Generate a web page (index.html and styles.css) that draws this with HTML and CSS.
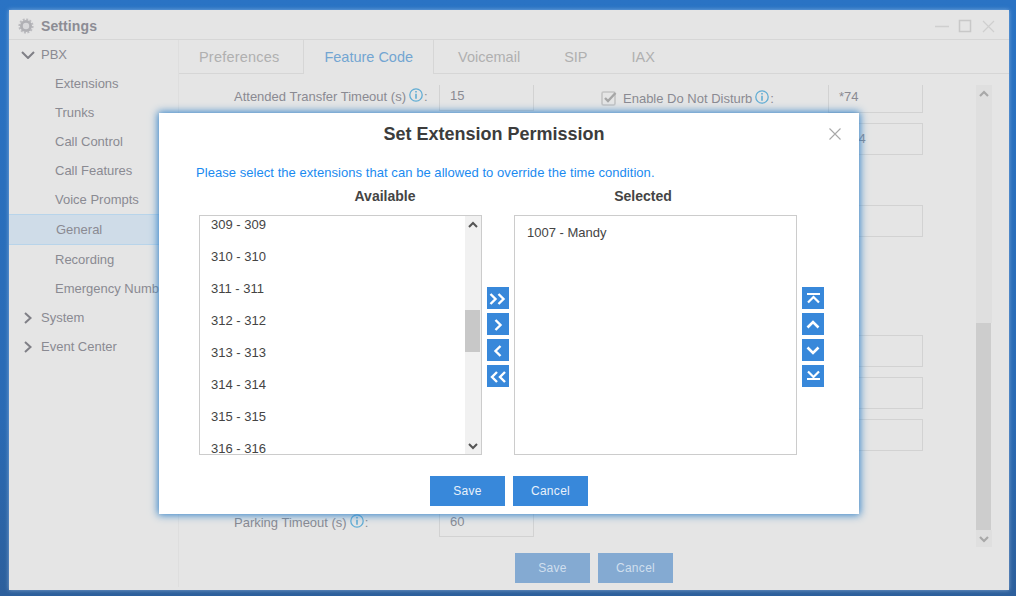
FILE: index.html
```html
<!DOCTYPE html>
<html lang="en">
<head>
    <meta charset="UTF-8">
    <title>Settings</title>
    <link rel="stylesheet" href="styles.css">
</head>
<body>
    <div class="window">
        <div class="title-bar">
            <svg class="gear" width="16" height="16" viewBox="0 0 16 16">
                <circle cx="8" cy="8" r="6.6" fill="none" stroke="#bcbcc0" stroke-width="2" stroke-dasharray="2 1.45"/>
                <circle cx="8" cy="8" r="6" fill="#b0b0b4"/>
                <circle cx="8" cy="8" r="3.2" fill="#d8d8da"/>
            </svg>
            <span class="title-text">Settings</span>
            <div class="window-controls">
                <svg width="14" height="14" viewBox="0 0 14 14"><path d="M0 7.5H14" stroke="#cfcfcf" stroke-width="1.6"/></svg>
                <svg width="14" height="14" viewBox="0 0 14 14"><rect x="1.5" y="1.5" width="11" height="11" fill="none" stroke="#c8c8c8" stroke-width="1.5"/></svg>
                <svg width="14" height="14" viewBox="0 0 14 14"><path d="M2 2L13 13M13 2L2 13" stroke="#cfcfcf" stroke-width="1.2"/></svg>
            </div>
        </div>

        <div class="window-body">
            <div class="sidebar">
                <div class="nav-group">
                    <svg width="14" height="8" viewBox="0 0 14 8"><path d="M1 1L7 7L13 1" fill="none" stroke="#7f7f86" stroke-width="2"/></svg>
                    PBX
                </div>
                <div class="nav-item">Extensions</div>
                <div class="nav-item">Trunks</div>
                <div class="nav-item">Call Control</div>
                <div class="nav-item">Call Features</div>
                <div class="nav-item">Voice Prompts</div>
                <div class="nav-item nav-item-active">General</div>
                <div class="nav-item">Recording</div>
                <div class="nav-item">Emergency Number</div>
                <div class="nav-group">
                    <svg class="nav-closed" width="8" height="12" viewBox="0 0 8 12"><path d="M1 1L6.5 6L1 11" fill="none" stroke="#7f7f86" stroke-width="2"/></svg>
                    System
                </div>
                <div class="nav-group">
                    <svg class="nav-closed" width="8" height="12" viewBox="0 0 8 12"><path d="M1 1L6.5 6L1 11" fill="none" stroke="#7f7f86" stroke-width="2"/></svg>
                    Event Center
                </div>
            </div>

            <div class="main">
                <div class="tabs">
                    <div class="tab tab-first">Preferences</div>
                    <div class="tab tab-active">Feature Code</div>
                    <div class="tab tab-after-active">Voicemail</div>
                    <div class="tab">SIP</div>
                    <div class="tab">IAX</div>
                </div>

                <div class="content">
                    <div class="form">
                        <div class="form-col form-col-left">
                            <div class="field field-first-left">
                                <label class="field-label field-label-left">Attended Transfer Timeout (s)<svg class="info" width="14" height="14" viewBox="0 0 14 14"><circle cx="7" cy="7" r="6.2" fill="none" stroke="#62add4" stroke-width="1.3"/><path d="M7 3V4.6M7 5.8V10.8" stroke="#62add4" stroke-width="1.6"/></svg>:</label>
                                <div class="field-input">15</div>
                            </div>
                            <div class="field field-parking">
                                <label class="field-label field-label-left">Parking Timeout (s)<svg class="info" width="14" height="14" viewBox="0 0 14 14"><circle cx="7" cy="7" r="6.2" fill="none" stroke="#62add4" stroke-width="1.3"/><path d="M7 3V4.6M7 5.8V10.8" stroke="#62add4" stroke-width="1.6"/></svg>:</label>
                                <div class="field-input">60</div>
                            </div>
                        </div>

                        <div class="form-col form-col-right">
                            <div class="field field-first-right">
                                <label class="field-label field-label-right">
                                    <svg class="check" width="16" height="16" viewBox="0 0 16 16"><rect x="1" y="2" width="13" height="13" rx="1.5" fill="none" stroke="#c4c4c4" stroke-width="1.6"/><path d="M4 8L7 11L14.5 3" fill="none" stroke="#a6a6a6" stroke-width="2.4"/></svg>Enable Do Not Disturb<svg class="info" width="14" height="14" viewBox="0 0 14 14"><circle cx="7" cy="7" r="6.2" fill="none" stroke="#62add4" stroke-width="1.3"/><path d="M7 3V4.6M7 5.8V10.8" stroke="#62add4" stroke-width="1.6"/></svg>:
                                </label>
                                <div class="field-input">*74</div>
                            </div>
                            <div class="field field-stack">
                                <div class="field-label-right"></div>
                                <div class="field-input">*074</div>
                            </div>
                            <div class="field field-gap-small">
                                <div class="field-label-right"></div>
                                <div class="field-input"></div>
                            </div>
                            <div class="field field-gap-large">
                                <div class="field-label-right"></div>
                                <div class="field-input"></div>
                            </div>
                            <div class="field field-stack">
                                <div class="field-label-right"></div>
                                <div class="field-input"></div>
                            </div>
                            <div class="field field-stack">
                                <div class="field-label-right"></div>
                                <div class="field-input"></div>
                            </div>
                        </div>
                    </div>

                    <div class="page-scrollbar">
                        <div class="page-scroll-btn">
                            <svg width="10" height="8" viewBox="0 0 10 8"><path d="M1 6L5 2L9 6" fill="none" stroke="#a8a8a8" stroke-width="2.2"/></svg>
                        </div>
                        <div class="page-scroll-track"></div>
                        <div class="page-scroll-thumb"></div>
                        <div class="page-scroll-btn">
                            <svg width="10" height="8" viewBox="0 0 10 8"><path d="M1 2L5 6L9 2" fill="none" stroke="#a8a8a8" stroke-width="2.2"/></svg>
                        </div>
                    </div>
                </div>

                <div class="page-buttons">
                    <button class="btn btn-dim">Save</button>
                    <button class="btn btn-dim">Cancel</button>
                </div>
            </div>
        </div>
    </div>

    <div class="modal">
        <div class="modal-title">Set Extension Permission</div>
        <svg class="modal-close" width="12" height="12" viewBox="0 0 12 12"><path d="M0.5 0.5L11.5 11.5M11.5 0.5L0.5 11.5" stroke="#a8a8a8" stroke-width="1.1"/></svg>
        <div class="modal-desc">Please select the extensions that can be allowed to override the time condition.</div>

        <div class="list-heads">
            <div class="list-head">Available</div>
            <div class="list-head">Selected</div>
        </div>

        <div class="transfer">
            <div class="list">
                <ul class="list-items list-items-scrolled">
                    <li>309 - 309</li>
                    <li>310 - 310</li>
                    <li>311 - 311</li>
                    <li>312 - 312</li>
                    <li>313 - 313</li>
                    <li>314 - 314</li>
                    <li>315 - 315</li>
                    <li>316 - 316</li>
                </ul>
                <div class="scrollbar">
                    <div class="scroll-btn">
                        <svg width="10" height="8" viewBox="0 0 10 8"><path d="M1 6L5 2L9 6" fill="none" stroke="#555" stroke-width="2"/></svg>
                    </div>
                    <div class="scroll-thumb"></div>
                    <div class="scroll-btn scroll-btn-down">
                        <svg width="10" height="8" viewBox="0 0 10 8"><path d="M1 2L5 6L9 2" fill="none" stroke="#555" stroke-width="2"/></svg>
                    </div>
                </div>
            </div>

            <div class="arrows">
                <button class="arrow-btn"><svg width="22" height="22" viewBox="0 0 22 22"><path d="M3.5 7L8.5 12L3.5 17M11.5 7L16.5 12L11.5 17" fill="none" stroke="#fff" stroke-width="2.4"/></svg></button>
                <button class="arrow-btn"><svg width="22" height="22" viewBox="0 0 22 22"><path d="M8.5 7L13.5 12L8.5 17" fill="none" stroke="#fff" stroke-width="2.4"/></svg></button>
                <button class="arrow-btn"><svg width="22" height="22" viewBox="0 0 22 22"><path d="M13.5 7L8.5 12L13.5 17" fill="none" stroke="#fff" stroke-width="2.4"/></svg></button>
                <button class="arrow-btn"><svg width="22" height="22" viewBox="0 0 22 22"><path d="M10 7L5 12L10 17M18 7L13 12L18 17" fill="none" stroke="#fff" stroke-width="2.4"/></svg></button>
            </div>

            <div class="list">
                <ul class="list-items">
                    <li>1007 - Mandy</li>
                </ul>
            </div>

            <div class="arrows">
                <button class="arrow-btn"><svg width="22" height="22" viewBox="0 0 22 22"><path d="M5 7H18" stroke="#fff" stroke-width="2"/><path d="M6 15.5L11.5 10L17 15.5" fill="none" stroke="#fff" stroke-width="2.2"/></svg></button>
                <button class="arrow-btn"><svg width="22" height="22" viewBox="0 0 22 22"><path d="M5.5 14.5L11 9L16.5 14.5" fill="none" stroke="#fff" stroke-width="2.6"/></svg></button>
                <button class="arrow-btn"><svg width="22" height="22" viewBox="0 0 22 22"><path d="M5.5 8.5L11 14L16.5 8.5" fill="none" stroke="#fff" stroke-width="2.6"/></svg></button>
                <button class="arrow-btn"><svg width="22" height="22" viewBox="0 0 22 22"><path d="M6 6.5L11.5 12L17 6.5" fill="none" stroke="#fff" stroke-width="2.2"/><path d="M5 14H18" stroke="#fff" stroke-width="2"/></svg></button>
            </div>
        </div>

        <div class="modal-buttons">
            <button class="btn">Save</button>
            <button class="btn">Cancel</button>
        </div>
    </div>
</body>
</html>
```

FILE: styles.css
```css
* {
    box-sizing: border-box;
}

body {
    margin: 0;
    height: 596px;
    padding: 10px 7px 6px 9px;
    overflow: hidden;
    background: linear-gradient(180deg, #2a73c4 0%, #2a6ab4 70%, #2d5f9c 100%);
    font-family: "Liberation Sans", Arial, sans-serif;
    font-size: 13px;
    color: #8a8a92;
}

.window {
    display: flex;
    flex-direction: column;
    height: 580px;
    background: #e5e5e5;
    box-shadow: 0 0 4px rgba(190, 215, 240, 0.6);
}

.title-bar {
    display: flex;
    align-items: center;
    height: 30px;
    padding: 2px 14px 0 9px;
    border-bottom: 1px solid #d6d6d6;
    flex-shrink: 0;
}

.gear {
    margin-right: 7px;
}

.title-text {
    font-size: 14px;
    font-weight: bold;
    letter-spacing: 0.1px;
    color: #8c8c94;
}

.window-controls {
    display: flex;
    gap: 9px;
    margin-left: auto;
}

.window-body {
    display: flex;
    flex: 1;
}

/* Left navigation */
.sidebar {
    width: 169px;
    flex-shrink: 0;
    white-space: nowrap;
}

.nav-group {
    display: flex;
    align-items: center;
    height: 29px;
    padding-left: 12px;
}

.nav-group svg {
    margin-right: 6px;
}

.nav-group .nav-closed {
    margin: 0 9px 0 3px;
}

.nav-item {
    height: 29px;
    line-height: 29px;
    padding-left: 46px;
}

.nav-item-active {
    height: 31px;
    line-height: 29px;
    padding-left: 47px;
    background: #cfdce8;
    border-top: 1px solid #b8d4ea;
    border-bottom: 1px solid #b8d4ea;
}

/* Tabs and form */
.main {
    display: flex;
    flex-direction: column;
    flex: 1;
    min-width: 0;
    margin-bottom: 3px;
    border-left: 1px solid #dedede;
}

.tabs {
    display: flex;
    height: 34px;
    border-bottom: 1px solid #d6d6d6;
    flex-shrink: 0;
    font-size: 14.5px;
    color: #b0b0b0;
    margin-bottom: -3px;
}

.tab {
    height: 34px;
    line-height: 34px;
    padding: 0 22px;
}

.tab-first {
    padding: 0 24px 0 20px;
    letter-spacing: 0.2px;
}

.tab-active {
    padding: 0 20px;
    background: #e5e5e5;
    color: #73a5d2;
    border-left: 1px solid #d6d6d6;
    border-right: 1px solid #d6d6d6;
}

.tab-after-active {
    padding-left: 24px;
}

.content {
    display: flex;
    height: 462px;
    margin-top: 14px;
    padding-right: 17px;
}

.form {
    display: flex;
    flex: 1;
    min-width: 0;
    overflow: hidden;
}

.form-col-left {
    width: 422px;
    flex-shrink: 0;
    padding-left: 55px;
}

.form-col-left .field-input {
    line-height: 32px;
}

.field {
    display: flex;
    height: 32px;
}

.field-first-left {
    margin-top: -6px;
}

.field-parking {
    margin-top: 394px;
}

.field-first-right {
    margin-top: -4px;
}

.field-stack {
    margin-top: 10px;
}

.field-gap-small {
    margin-top: 50px;
}

.field-gap-large {
    margin-top: 98px;
}

.field-label {
    display: flex;
    align-items: center;
    padding-top: 2px;
    white-space: nowrap;
}

.field-label-left {
    width: 205px;
}

.field-label-right {
    width: 227px;
    flex-shrink: 0;
}

.info {
    margin: 0 1px 3px 3px;
}

.check {
    margin-right: 6px;
}

.field-input {
    width: 95px;
    height: 32px;
    line-height: 30px;
    padding-left: 10px;
    border: 1px solid #d2d2d2;
    white-space: nowrap;
}

.page-scrollbar {
    display: flex;
    flex-direction: column;
    width: 16px;
    flex-shrink: 0;
}

.page-scroll-btn {
    display: flex;
    align-items: center;
    justify-content: center;
    height: 17px;
    background: #dfdfdf;
}

.page-scroll-track {
    flex: 1;
    background: #dfdfdf;
}

.page-scroll-thumb {
    height: 207px;
    width: 15px;
    background: #cdcdcd;
}

.page-buttons {
    display: flex;
    gap: 8px;
    margin-top: 6px;
    padding-left: 336px;
}

/* Buttons */
.btn {
    width: 75px;
    height: 30px;
    padding: 0;
    border: none;
    background: #3888da;
    color: #e8f1fa;
    font-family: "Liberation Sans", Arial, sans-serif;
    font-size: 12px;
    letter-spacing: 0.3px;
}

.btn-dim {
    background: #84aad2;
    color: #d0dfee;
}

/* Dialog */
.modal {
    position: absolute;
    left: 159px;
    top: 113px;
    width: 700px;
    height: 401px;
    background: #ffffff;
    box-shadow: 0 0 8px 1px #2f80c8;
    color: #444444;
}

.modal-title {
    height: 42px;
    padding-right: 30px;
    line-height: 42px;
    text-align: center;
    font-size: 18px;
    font-weight: bold;
    color: #3c3c3c;
}

.modal-close {
    position: absolute;
    top: 15px;
    right: 18px;
}

.modal-desc {
    margin-top: 8px;
    padding-left: 37px;
    line-height: 20px;
    color: #1a8af0;
    letter-spacing: 0.05px;
}

.list-heads {
    display: flex;
    gap: 118px;
    margin-top: 3px;
    padding-left: 156px;
}

.list-head {
    width: 140px;
    line-height: 20px;
    text-align: center;
    font-size: 14px;
    font-weight: bold;
}

.transfer {
    display: flex;
    align-items: center;
    gap: 5px;
    margin-top: 9px;
    padding-left: 40px;
}

.list {
    display: flex;
    width: 283px;
    height: 240px;
    border: 1px solid #cccccc;
}

.list-items {
    flex: 1;
    margin: 0;
    padding: 0;
    list-style: none;
    overflow: hidden;
}

.list-items li {
    height: 32px;
    line-height: 32px;
    padding: 1px 0 0 12px;
}

.list-items-scrolled li {
    padding-left: 11px;
}

.list-items-scrolled li:first-child {
    margin-top: -8px;
}

.scrollbar {
    display: flex;
    flex-direction: column;
    width: 16px;
    background: #f1f1f1;
}

.scroll-btn {
    display: flex;
    align-items: center;
    justify-content: center;
    height: 17px;
}

.scroll-btn-down {
    margin-top: auto;
}

.scroll-thumb {
    width: 15px;
    height: 42px;
    margin-top: 77px;
    background: #c8c8c8;
}

.arrows {
    display: flex;
    flex-direction: column;
    gap: 4px;
    margin-top: 4px;
}

.arrow-btn {
    display: block;
    width: 22px;
    height: 22px;
    padding: 0;
    border: none;
    background: #3888da;
}

.arrow-btn svg {
    display: block;
}

.modal-buttons {
    display: flex;
    justify-content: center;
    gap: 8px;
    margin-top: 21px;
}
```
